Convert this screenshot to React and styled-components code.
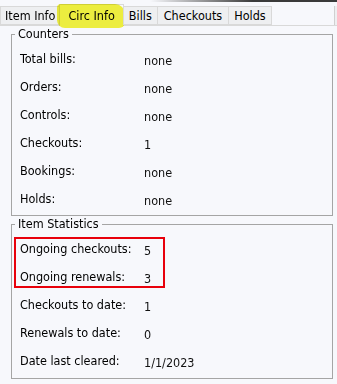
import styled, { createGlobalStyle } from "styled-components";

const GlobalStyle = createGlobalStyle`
  html, body {
    margin: 0;
    padding: 0;
    background: #f7f8fc;
  }
  body {
    font-family: "DejaVu Sans Condensed", "DejaVu Sans", Verdana, sans-serif;
    font-size: 12.5px;
    color: #000;
  }
`;

const Page = styled.div`
  width: 337px;
  height: 384px;
  overflow: hidden;
  background: #f7f8fc;
`;

const TopEdge = styled.div`
  height: 2px;
  margin-left: 150px;
  background: linear-gradient(to right, rgba(60, 60, 60, 0), #3a3a3a 55%);
`;

const TabBar = styled.div`
  display: flex;
  align-items: flex-end;
  height: 23px;
  border-bottom: 1px solid #d9d9d9;
`;

const Tab = styled.div`
  position: relative;
  height: ${(p) => (p.$active ? "22px" : "19px")};
  margin-bottom: ${(p) => (p.$active ? "-1px" : "0")};
  padding: 0 ${(p) => p.$pad || 5}px;
  display: flex;
  align-items: center;
  box-sizing: border-box;
  background: ${(p) => (p.$active ? "#f7f8fc" : "#eeeff1")};
  border: 1px solid #d9d9d9;
  border-bottom: ${(p) => (p.$active ? "none" : "1px solid #d9d9d9")};
  margin-right: -1px;
  white-space: nowrap;
  color: #000;

  ${(p) =>
    p.$active &&
    `
    &::after {
      content: "";
      position: absolute;
      left: -3px;
      right: -2px;
      top: -1px;
      bottom: -2px;
      background: #f4f42e;
      mix-blend-mode: multiply;
      border-radius: 4px 10px 6px 8px;
      opacity: 0.92;
    }
  `}
`;

const TabEdge = styled.div`
  margin-left: auto;
  width: 2px;
  height: 19px;
  border-left: 1px solid #d0d0d0;
  background: #eeeff1;
`;

const Group = styled.fieldset`
  margin: 0 4px 0 11px;
  padding: 3px 8px ${(p) => p.$bottom || 2}px 8px;
  border: 1px solid #a5a5a5;
  min-width: 0;
`;

const Legend = styled.legend`
  margin-left: -5px;
  padding: 0 3px;
  line-height: 16px;
`;

const RowLine = styled.div`
  display: grid;
  grid-template-columns: 124px 1fr;
  height: 28px;
`;

const Label = styled.div`
  display: flex;
  align-items: center;
  padding-bottom: 2px;
`;

const Value = styled.div`
  display: flex;
  align-items: center;
  padding-top: 3px;
  color: #111;
`;

const MarkBox = styled.div`
  position: relative;

  &::after {
    content: "";
    position: absolute;
    left: -6px;
    top: 2px;
    width: 147px;
    height: 47px;
    border: 2px solid #e8000b;
    pointer-events: none;
  }
`;

const counters = [
  ["Total bills:", "none"],
  ["Orders:", "none"],
  ["Controls:", "none"],
  ["Checkouts:", "1"],
  ["Bookings:", "none"],
  ["Holds:", "none"],
];

const marked = [
  ["Ongoing checkouts:", "5"],
  ["Ongoing renewals:", "3"],
];

const stats = [
  ["Checkouts to date:", "1"],
  ["Renewals to date:", "0"],
  ["Date last cleared:", "1/1/2023"],
];

const Row = ({ label, value }) => (
  <RowLine>
    <Label>{label}</Label>
    <Value>{value}</Value>
  </RowLine>
);

export default function App() {
  return (
    <Page>
      <GlobalStyle />
      <TopEdge />
      <TabBar>
        <Tab $pad={4}>Item Info</Tab>
        <Tab $active $pad={8}>Circ Info</Tab>
        <Tab $pad={5}>Bills</Tab>
        <Tab $pad={6}>Checkouts</Tab>
        <Tab $pad={5}>Holds</Tab>
        <TabEdge />
      </TabBar>

      <Group>
        <Legend>Counters</Legend>
        {counters.map(([l, v]) => (
          <Row key={l} label={l} value={v} />
        ))}
      </Group>

      <Group $bottom={3}>
        <Legend>Item Statistics</Legend>
        <MarkBox>
          {marked.map(([l, v]) => (
            <Row key={l} label={l} value={v} />
          ))}
        </MarkBox>
        {stats.map(([l, v]) => (
          <Row key={l} label={l} value={v} />
        ))}
      </Group>
    </Page>
  );
}
